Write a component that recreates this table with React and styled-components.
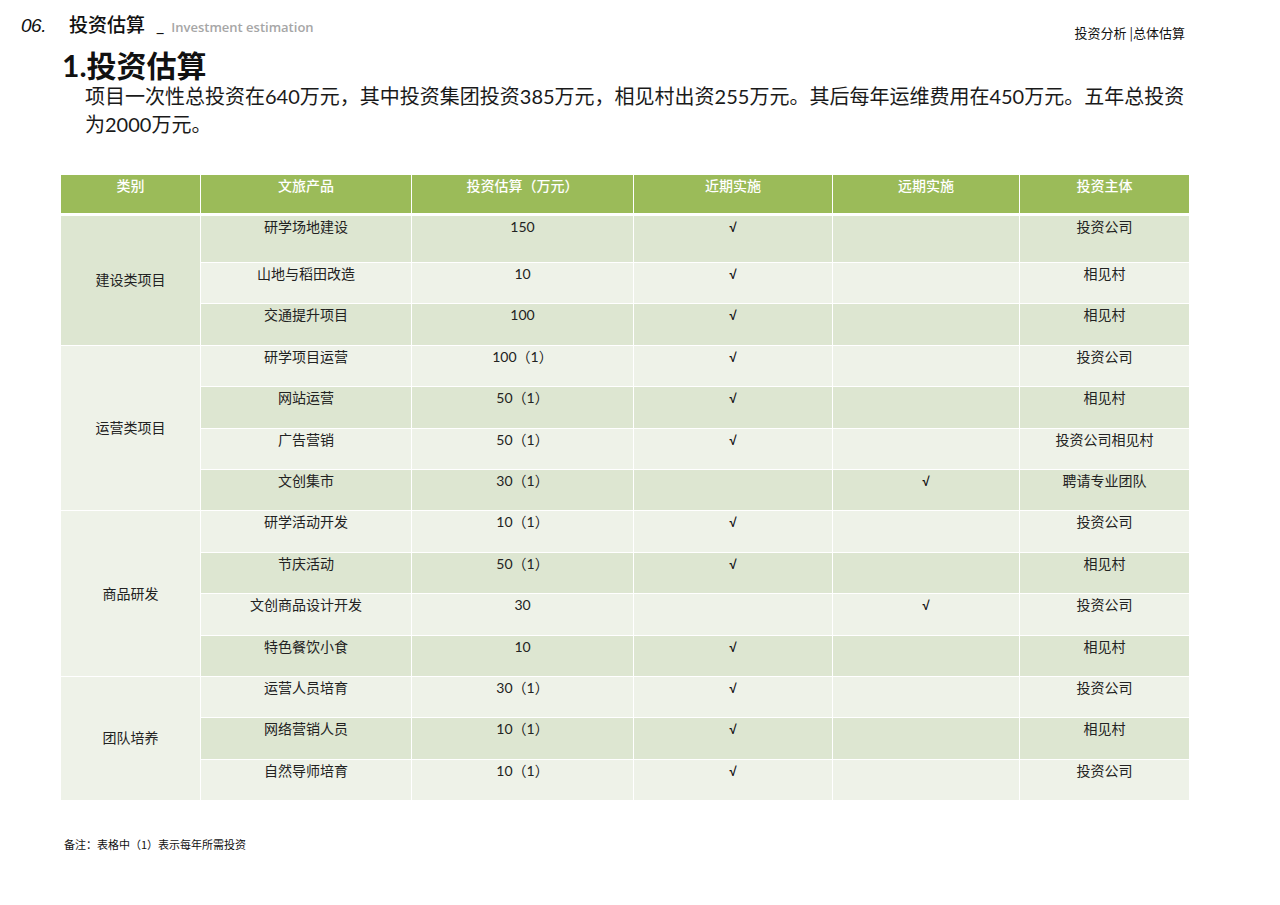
import React from "react";
import styled, { createGlobalStyle } from "styled-components";

const GlobalStyle = createGlobalStyle`
  body {
    margin: 0;
    background: #fff;
    font-family: Lato, "Noto Sans CJK SC", sans-serif;
    color: #111;
  }
`;

const Page = styled.div`
  width: 1280px;
  height: 905px;
  position: relative;
  overflow: hidden;
`;

const TopBar = styled.div`
  display: flex;
  align-items: flex-start;
  justify-content: space-between;
  padding: 10px 95px 0 21px;
  height: 40px;
  box-sizing: border-box;
`;

const Chapter = styled.div`
  display: flex;
  align-items: baseline;
`;

const Num = styled.span`
  font-family: "Liberation Sans", sans-serif;
  font-style: italic;
  font-size: 19px;
  width: 48px;
  letter-spacing: -0.5px;
`;

const ChapterName = styled.span`
  font-family: "Noto Sans CJK SC", sans-serif;
  font-size: 19px;
  font-weight: 500;
`;

const Dash = styled.span`
  font-size: 18px;
  margin: 0 7px 0 11px;
`;

const English = styled.span`
  font-family: "Open Sans", sans-serif;
  font-size: 13px;
  font-weight: 600;
  color: #a6a6a6;
`;

const Crumb = styled.div`
  font-family: "Noto Sans CJK SC", sans-serif;
  font-size: 13px;
  margin-top: 13px;
`;

const Title = styled.h1`
  margin: 8px 0 0 62px;
  font-size: 30px;
  font-weight: 700;
  line-height: 34px;
  font-family: Lato, "Noto Sans CJK SC", sans-serif;
`;

const Lead = styled.p`
  margin: 0 88px 0 85px;
  font-size: 20px;
  line-height: 28px;
  color: #1a1a1a;
  font-family: Lato, "Noto Sans CJK SC", sans-serif;
`;

const Table = styled.table`
  margin: 36px 0 0 60px;
  width: 1129px;
  border-collapse: collapse;
  table-layout: fixed;
  font-size: 14px;
  font-family: Lato, "Noto Sans CJK SC", sans-serif;
`;

const Th = styled.th`
  background: #9bbb59;
  color: #fff;
  font-weight: 500;
  height: 38px;
  padding: 0;
  vertical-align: top;
  border: 1px solid #fff;
  border-bottom: 3px solid #fff;
  font-size: 14px;
  line-height: 22px;
`;

const Td = styled.td`
  background: ${(p) => (p.$dark ? "#dde6d1" : "#eef2e8")};
  border: 1.5px solid #fff;
  text-align: center;
  vertical-align: ${(p) => (p.$middle ? "middle" : "top")};
  padding: 0;
  line-height: 22px;
  height: ${(p) => p.$h || 41.4}px;
  box-sizing: border-box;
  color: #222;
`;

const Check = styled.span`
  font-family: "Liberation Sans", sans-serif;
  font-weight: 700;
  font-size: 13px;
  color: #111;
`;

const Note = styled.div`
  margin: 35px 0 0 64px;
  font-size: 11px;
  font-family: "Noto Sans CJK SC", sans-serif;
`;

const groups = [
  {
    name: "建设类项目",
    rows: [
      ["研学场地建设", "150", true, false, "投资公司"],
      ["山地与稻田改造", "10", true, false, "相见村"],
      ["交通提升项目", "100", true, false, "相见村"],
    ],
  },
  {
    name: "运营类项目",
    rows: [
      ["研学项目运营", "100（1）", true, false, "投资公司"],
      ["网站运营", "50（1）", true, false, "相见村"],
      ["广告营销", "50（1）", true, false, "投资公司相见村"],
      ["文创集市", "30（1）", false, true, "聘请专业团队"],
    ],
  },
  {
    name: "商品研发",
    rows: [
      ["研学活动开发", "10（1）", true, false, "投资公司"],
      ["节庆活动", "50（1）", true, false, "相见村"],
      ["文创商品设计开发", "30", false, true, "投资公司"],
      ["特色餐饮小食", "10", true, false, "相见村"],
    ],
  },
  {
    name: "团队培养",
    rows: [
      ["运营人员培育", "30（1）", true, false, "投资公司"],
      ["网络营销人员", "10（1）", true, false, "相见村"],
      ["自然导师培育", "10（1）", true, false, "投资公司"],
    ],
  },
];

const heads = ["类别", "文旅产品", "投资估算（万元）", "近期实施", "远期实施", "投资主体"];
const widths = [140, 211, 222, 199, 187, 170];

export default function App() {
  let idx = 0;
  return (
    <Page>
      <GlobalStyle />
      <TopBar>
        <Chapter>
          <Num>06.</Num>
          <ChapterName>投资估算</ChapterName>
          <Dash>_</Dash>
          <English>Investment estimation</English>
        </Chapter>
        <Crumb>投资分析 |总体估算</Crumb>
      </TopBar>
      <Title>1.投资估算</Title>
      <Lead>
        项目一次性总投资在640万元，其中投资集团投资385万元，相见村出资255万元。其后每年运维费用在450万元。五年总投资为2000万元。
      </Lead>
      <Table>
        <colgroup>
          {widths.map((w, i) => (
            <col key={i} style={{ width: w }} />
          ))}
        </colgroup>
        <thead>
          <tr>
            {heads.map((h) => (
              <Th key={h}>{h}</Th>
            ))}
          </tr>
        </thead>
        <tbody>
          {groups.map((g, gi) =>
            g.rows.map((r, ri) => {
              const dark = idx % 2 === 0;
              const h = idx === 0 ? 48 : 41.4;
              idx += 1;
              return (
                <tr key={`${gi}-${ri}`}>
                  {ri === 0 && (
                    <Td rowSpan={g.rows.length} $dark={gi === 0} $middle>
                      {g.name}
                    </Td>
                  )}
                  <Td $dark={dark} $h={h}>{r[0]}</Td>
                  <Td $dark={dark} $h={h}>{r[1]}</Td>
                  <Td $dark={dark} $h={h}>{r[2] && <Check>√</Check>}</Td>
                  <Td $dark={dark} $h={h}>{r[3] && <Check>√</Check>}</Td>
                  <Td $dark={dark} $h={h}>{r[4]}</Td>
                </tr>
              );
            })
          )}
        </tbody>
      </Table>
      <Note>备注：表格中（1）表示每年所需投资</Note>
    </Page>
  );
}
